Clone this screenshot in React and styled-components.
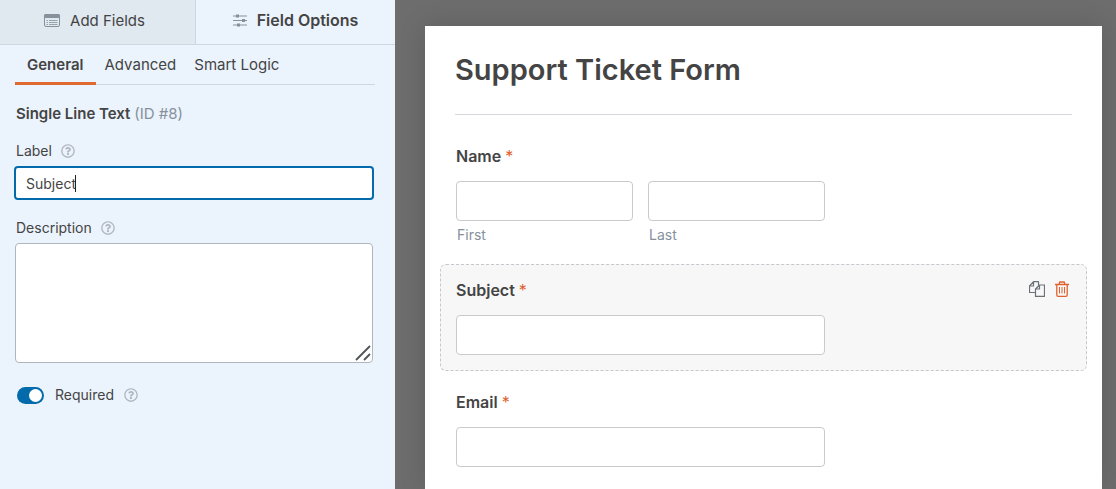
import React, { useState } from "react";
import styled, { createGlobalStyle } from "styled-components";
import { FaRegQuestionCircle } from "react-icons/fa";

const GlobalStyle = createGlobalStyle`
  * {
    box-sizing: border-box;
  }
  body {
    margin: 0;
    color: #444;
    font-family: Inter, "Liberation Sans", sans-serif;
  }
  button, input, textarea {
    font: inherit;
    color: inherit;
  }
`;

const Page = styled.div`
  display: flex;
  min-height: 100vh;
  background: #6d6d6d;
`;

const Sidebar = styled.aside`
  flex: 0 0 395px;
  background: #ebf3fc;
`;

const PanelTabs = styled.nav`
  display: grid;
  grid-template-columns: 196px 1fr;
`;

const PanelTab = styled.button`
  display: flex;
  align-items: center;
  justify-content: center;
  gap: 10px;
  height: 45px;
  padding: 0 0 4px;
  border: 0;
  border-bottom: 1px solid #ced7e0;
  background: ${({ $active }) => ($active ? "#ebf3fc" : "#e0e8f0")};
  font-size: ${({ $active }) => ($active ? 16 : 15)}px;
  font-weight: ${({ $active }) => ($active ? 600 : 400)};
  cursor: pointer;
  &:first-child {
    padding-right: 6px;
    border-right: 1px solid #ced7e0;
  }
  svg {
    color: #86919b;
  }
`;

const SectionTabs = styled.nav`
  display: flex;
  margin: 0 20px 0 15px;
  border-bottom: 1px solid #ced7e0;
`;

const SectionTab = styled.button`
  height: 40px;
  margin-bottom: -1px;
  padding: 1px ${({ $active }) => ($active ? 12 : 9)}px 0;
  border: 0;
  border-bottom: 3px solid ${({ $active }) => ($active ? "#e0692f" : "transparent")};
  background: none;
  font-size: 15px;
  font-weight: ${({ $active }) => ($active ? 600 : 400)};
  cursor: pointer;
`;

const Options = styled.div`
  padding: 19px 22px 20px 15px;
  font-size: 14px;
`;

const FieldTitle = styled.h2`
  margin: 0 0 17px;
  padding-left: 1px;
  font-size: 15px;
  font-weight: 600;
  line-height: 20px;
  span {
    color: #86919b;
    font-weight: 400;
  }
`;

const OptionRow = styled.div`
  margin-bottom: 18px;
`;

const OptionLabel = styled.div`
  display: flex;
  align-items: center;
  gap: 9px;
  padding: 0 0 5px 1px;
  line-height: 20px;
`;

const HelpButton = styled.button`
  display: flex;
  padding: 0;
  border: 0;
  background: none;
  color: #b0b6bd;
  font-size: 14px;
  cursor: pointer;
`;

const TextBox = styled.div`
  display: flex;
  align-items: center;
  height: 34px;
  margin: 0 -1px;
  padding: 0 10px;
  border: 2px solid #036aab;
  border-radius: 4px;
  background: #fff;
  input {
    field-sizing: content;
    padding: 0;
    border: 0;
    outline: 0;
    background: none;
    caret-color: transparent;
  }
`;

const Caret = styled.span`
  width: 1px;
  height: 17px;
  margin-left: -1px;
  background: #222;
`;

const TextAreaBox = styled.div`
  position: relative;
  display: flex;
  textarea {
    width: 100%;
    height: 120px;
    padding: 10px;
    border: 1px solid #b0b6bd;
    border-radius: 4px;
    outline: 0;
    background: #fff;
    resize: none;
  }
  svg {
    position: absolute;
    right: 2px;
    bottom: 2px;
    pointer-events: none;
  }
`;

const ToggleRow = styled.div`
  display: flex;
  align-items: center;
  gap: 10px;
  padding: 4px 2px;
  line-height: 20px;
`;

const Toggle = styled.input`
  appearance: none;
  display: flex;
  width: 27px;
  height: 17px;
  margin: 0 1px 0 0;
  padding: 2px;
  border-radius: 9px;
  background: #b0b6bd;
  cursor: pointer;
  &::before {
    content: "";
    width: 13px;
    height: 13px;
    border-radius: 50%;
    background: #fff;
  }
  &:checked {
    justify-content: flex-end;
    background: #036aab;
  }
`;

const Preview = styled.main`
  flex: 1;
  display: flex;
  padding: 26px 14px 0 30px;
`;

const FormCard = styled.form`
  flex: 1;
  padding: 24px 15px 0;
  background: #fff;
  box-shadow: 0 0 25px rgba(0, 0, 0, 0.15);
`;

const FormTitle = styled.h1`
  margin: 0 15px 15px;
  padding-bottom: 24px;
  border-bottom: 1px solid #d6d6de;
  font-size: 29px;
  font-weight: 600;
  line-height: 40px;
`;

const Field = styled.section`
  position: relative;
  margin-bottom: 5px;
  padding: 15px;
  border: 1px dashed ${({ $selected }) => ($selected ? "#c4c8cc" : "transparent")};
  border-radius: 6px;
  background: ${({ $selected }) => ($selected ? "#f7f7f7" : "transparent")};
`;

const FieldLabel = styled.label`
  display: block;
  margin-bottom: 15px;
  font-size: 16px;
  font-weight: 600;
  line-height: 20px;
  span {
    color: #e0622f;
    font-weight: 400;
  }
`;

const FieldInputs = styled.div`
  display: flex;
  gap: 15px;
  width: 60%;
  min-width: 240px;
`;

const SubField = styled.div`
  flex: 1;
  display: flex;
  flex-direction: column;
  label {
    padding: 6px 1px 0;
    color: #86919b;
    font-size: 14px;
    line-height: 16px;
  }
`;

const FieldInput = styled.input`
  width: 100%;
  height: 40px;
  padding: 0 10px;
  border: 1px solid #c8cacc;
  border-radius: 4px;
  background: #fff;
  font-size: 16px;
`;

const FieldActions = styled.div`
  position: absolute;
  top: 16px;
  right: 17px;
  display: flex;
  align-items: center;
  gap: 10px;
`;

const ActionButton = styled.button`
  display: flex;
  padding: 0;
  border: 0;
  background: none;
  color: ${({ $danger }) => ($danger ? "#e0622f" : "#6b7178")};
  cursor: pointer;
`;

const ListIcon = () => (
  <svg width="16" height="13" viewBox="0 0 16 13" fill="none" stroke="currentColor" aria-hidden="true">
    <rect x="0.5" y="0.5" width="15" height="12" rx="1.5" />
    <path d="M0 1.5Q0 0 1.5 0h13Q16 0 16 1.5V4H0z" fill="currentColor" stroke="none" />
    <path d="M2.5 6.5H4M5 6.5h8.5M2.5 8.5H4M5 8.5h8.5M2.5 10.5H4M5 10.5h8.5" strokeWidth="0.8" />
  </svg>
);

const SlidersIcon = () => (
  <svg width="14" height="13" viewBox="0 0 14 13" fill="currentColor" aria-hidden="true">
    <path d="M0 1.5h14v1H0zM0 6h14v1H0zM0 10.5h14v1H0z" />
    <path d="M3 .5h3v3H3zM9 5h3v3H9zM4 9.5h3v3H4z" />
  </svg>
);

const CopyIcon = () => (
  <svg width="16" height="16" viewBox="0 0 16 16" fill="none" stroke="currentColor" strokeWidth="1.2" strokeLinejoin="round" aria-hidden="true">
    <path d="M6.5 11.5h-6V5l4-4.4h5V4M4.5.6V5h-4" />
    <path d="M10.5 4h5v11.400h-9V8zM10.5 4v4h-4" />
  </svg>
);

const TrashIcon = () => (
  <svg width="14" height="16" viewBox="0 0 14 16" fill="none" stroke="currentColor" strokeWidth="1.3" aria-hidden="true">
    <path d="M0 3.500h14M4 3.500L4.800 1h4.400L10 3.500" />
    <path d="M1.800 3.500V14q0 1.300 1.300 1.300h7.800q1.300 0 1.300-1.300V3.500" />
    <path d="M4.500 6v6.500M7 6v6.500M9.500 6v6.500" strokeWidth="1" />
  </svg>
);

const ResizeIcon = () => (
  <svg width="16" height="16" viewBox="0 0 16 16" stroke="#50555a" strokeWidth="1.8" aria-hidden="true">
    <path d="M1 15L15 1M9 15l6-6" />
  </svg>
);

const Help = ({ topic }) => (
  <HelpButton type="button" aria-label={`Help: ${topic}`}>
    <FaRegQuestionCircle />
  </HelpButton>
);

const PreviewField = ({ id, label, required, selected, children }) => (
  <Field $selected={selected}>
    <FieldLabel htmlFor={id}>
      {label} {required && <span>*</span>}
    </FieldLabel>
    {selected && (
      <FieldActions>
        <ActionButton type="button" aria-label="Duplicate field">
          <CopyIcon />
        </ActionButton>
        <ActionButton type="button" aria-label="Delete field" $danger>
          <TrashIcon />
        </ActionButton>
      </FieldActions>
    )}
    <FieldInputs>{children}</FieldInputs>
  </Field>
);

const App = () => {
  const [label, setLabel] = useState("Subject");
  const [required, setRequired] = useState(true);

  return (
    <Page>
      <GlobalStyle />
      <Sidebar>
        <PanelTabs>
          <PanelTab type="button">
            <ListIcon />
            Add Fields
          </PanelTab>
          <PanelTab type="button" $active>
            <SlidersIcon />
            Field Options
          </PanelTab>
        </PanelTabs>
        <SectionTabs>
          <SectionTab type="button" $active>General</SectionTab>
          <SectionTab type="button">Advanced</SectionTab>
          <SectionTab type="button">Smart Logic</SectionTab>
        </SectionTabs>
        <Options>
          <FieldTitle>
            Single Line Text <span>(ID #8)</span>
          </FieldTitle>
          <OptionRow>
            <OptionLabel>
              <label htmlFor="option-label">Label</label>
              <Help topic="Label" />
            </OptionLabel>
            <TextBox>
              <input id="option-label" type="text" value={label} onChange={(e) => setLabel(e.target.value)} />
              <Caret />
            </TextBox>
          </OptionRow>
          <OptionRow>
            <OptionLabel>
              <label htmlFor="option-description">Description</label>
              <Help topic="Description" />
            </OptionLabel>
            <TextAreaBox>
              <textarea id="option-description" />
              <ResizeIcon />
            </TextAreaBox>
          </OptionRow>
          <ToggleRow>
            <Toggle
              id="option-required"
              type="checkbox"
              checked={required}
              onChange={(e) => setRequired(e.target.checked)}
            />
            <label htmlFor="option-required">Required</label>
            <Help topic="Required" />
          </ToggleRow>
        </Options>
      </Sidebar>
      <Preview>
        <FormCard>
          <FormTitle>Support Ticket Form</FormTitle>
          <PreviewField id="name-first" label="Name" required>
            <SubField>
              <FieldInput id="name-first" type="text" />
              <label htmlFor="name-first">First</label>
            </SubField>
            <SubField>
              <FieldInput id="name-last" type="text" />
              <label htmlFor="name-last">Last</label>
            </SubField>
          </PreviewField>
          <PreviewField id="subject" label={label} required={required} selected>
            <FieldInput id="subject" type="text" />
          </PreviewField>
          <PreviewField id="email" label="Email" required>
            <FieldInput id="email" type="email" />
          </PreviewField>
        </FormCard>
      </Preview>
    </Page>
  );
};

export default App;
